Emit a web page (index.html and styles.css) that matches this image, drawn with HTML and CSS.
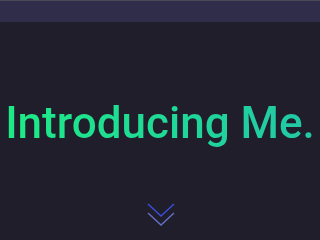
FILE: index.html
```html
<!DOCTYPE html>
<html lang="en">
<head>
    <meta charset="UTF-8">
    <meta name="viewport" content="width=device-width, initial-scale=1.0">
    <title>Introducing Me</title>
    <link rel="stylesheet" href="styles.css">
</head>
<body>
    <header class="topbar"></header>
    <main class="hero">
        <h1 class="hero-title">Introducing Me.</h1>
        <a class="scroll-down" href="#about" aria-label="Scroll down">
            <svg width="28" height="26" viewBox="0 0 28 26">
                <polyline points="1,1 14,13 27,1" fill="none" stroke="#3a4fe0" stroke-width="1.4"/>
                <polyline points="1,10 14,22 27,10" fill="none" stroke="#6470c8" stroke-width="1.4"/>
            </svg>
        </a>
    </main>
</body>
</html>
```

FILE: styles.css
```css
body {
    margin: 0;
    background: #201e2b;
    font-family: Roboto, "Liberation Sans", sans-serif;
    height: 240px;
    overflow: hidden;
}
.topbar {
    height: 21px;
    background: #302d4a;
    border-top: 1px solid #4b4957;
}
.hero {
    display: flex;
    flex-direction: column;
    align-items: center;
}
.hero-title {
    margin: 75px 0 0;
    font-size: 44px;
    font-weight: 500;
    line-height: 52px;
    white-space: nowrap;
    background: linear-gradient(90deg, #1deb86, #22c8a6);
    -webkit-background-clip: text;
    background-clip: text;
    color: transparent;
}
.scroll-down {
    display: block;
    margin-top: 54px;
    margin-left: 2px;
    line-height: 0;
}
```
